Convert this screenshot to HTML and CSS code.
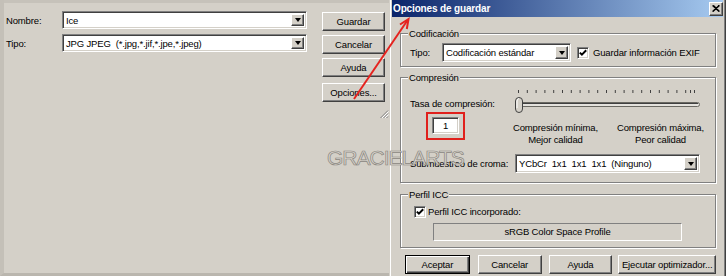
FILE: index.html
```html
<!DOCTYPE html>
<html lang="es">
<head>
<meta charset="utf-8">
<title>Opciones de guardar</title>
<link rel="stylesheet" href="styles.css">
</head>
<body>
<div class="screen">
  <div class="left">
    <div class="filedlg">
      <div class="fd-main">
        <div class="fd-fields">
          <span class="fd-label">Nombre:</span>
          <div class="combo"><span class="combo-text">Ice</span><span class="drop"></span></div>
          <span class="fd-label">Tipo:</span>
          <div class="combo"><span class="combo-text">JPG JPEG  (*.jpg,*.jif,*.jpe,*.jpeg)</span><span class="drop"></span></div>
        </div>
        <div class="fd-buttons">
          <button class="btn">Guardar</button>
          <button class="btn">Cancelar</button>
          <button class="btn">Ayuda</button>
          <button class="btn btn-last">Opciones...</button>
        </div>
      </div>
      <svg class="grip" width="9" height="8" viewBox="0 0 9 8">
        <path d="M8 0.5 L0.5 8 M8 3.5 L3.5 8 M8 6.5 L6.5 8" stroke="#808080" stroke-width="1"/>
        <path d="M8.5 1.5 L1.5 8.5 M8.5 4.5 L4.5 8.5" stroke="#fff" stroke-width="1"/>
      </svg>
    </div>
  </div>

  <div class="dialog">
    <div class="titlebar">
      <span class="title">Opciones de guardar</span>
      <span class="close"><svg width="8" height="7" viewBox="0 0 8 7"><path d="M0.5 0.5 L7 6.5 M1.5 0.5 L7.5 6.5 M7 0.5 L0.5 6.5 M7.5 0.5 L1 6.5" stroke="#000" stroke-width="1.1"/></svg></span>
    </div>
    <div class="dlg-body">
      <fieldset class="group group-cod">
        <legend>Codificación</legend>
        <div class="cod-row">
          <span class="cod-label">Tipo:</span>
          <div class="combo combo-cod"><span class="combo-text">Codificación estándar</span><span class="drop"></span></div>
          <span class="chk"><svg width="8" height="8" viewBox="0 0 8 8"><polyline points="0.8,3.6 2.9,5.7 7.2,1.3" fill="none" stroke="#000" stroke-width="2"/></svg></span>
          <span class="chk-label">Guardar información EXIF</span>
        </div>
      </fieldset>

      <fieldset class="group group-comp">
        <legend>Compresión</legend>
        <div class="rate-row">
          <span class="rate-label">Tasa de compresión:</span>
          <svg class="slider" width="188" height="24" viewBox="0 0 188 24">
            <g fill="#404040">
              <rect x="3" y="2" width="1" height="3"/><rect x="11.8" y="2" width="1" height="3"/><rect x="20.6" y="2" width="1" height="3"/><rect x="29.4" y="2" width="1" height="3"/><rect x="38.2" y="2" width="1" height="3"/><rect x="47" y="2" width="1" height="3"/><rect x="55.8" y="2" width="1" height="3"/><rect x="64.6" y="2" width="1" height="3"/><rect x="73.4" y="2" width="1" height="3"/><rect x="82.2" y="2" width="1" height="3"/><rect x="91" y="2" width="1" height="3"/><rect x="99.8" y="2" width="1" height="3"/><rect x="108.6" y="2" width="1" height="3"/><rect x="117.4" y="2" width="1" height="3"/><rect x="126.2" y="2" width="1" height="3"/><rect x="135" y="2" width="1" height="3"/><rect x="143.8" y="2" width="1" height="3"/><rect x="152.6" y="2" width="1" height="3"/><rect x="161.4" y="2" width="1" height="3"/><rect x="170.2" y="2" width="1" height="3"/><rect x="175" y="2" width="1" height="3"/><rect x="179" y="2" width="1" height="3"/>
            </g>
            <rect x="1.5" y="14.5" width="183" height="4" rx="2" fill="#e4e2dd" stroke="#6a6862"/>
            <line x1="3" y1="15.5" x2="183" y2="15.5" stroke="#404040"/>
            <rect x="0.5" y="9.5" width="7" height="15" rx="3.5" fill="#d4d0c8" stroke="#404040"/>
            <path d="M2 20 V13 Q2 11 4 10.5" fill="none" stroke="#fff"/>
          </svg>
        </div>
        <div class="mid-row">
          <div class="redbox"><span class="numbox">1</span></div>
          <div class="quality">
            <span>Compresión mínima,<br>Mejor calidad</span>
            <span>Compresión máxima,<br>Peor calidad</span>
          </div>
        </div>
        <div class="sub-row">
          <span class="sub-label">Submuestreo de croma:</span>
          <div class="combo combo-sub"><span class="combo-text">YCbCr  1x1  1x1  1x1  (Ninguno)</span><span class="drop"></span></div>
        </div>
      </fieldset>

      <fieldset class="group group-icc">
        <legend>Perfil ICC</legend>
        <div class="icc-row">
          <span class="chk"><svg width="8" height="8" viewBox="0 0 8 8"><polyline points="0.8,3.6 2.9,5.7 7.2,1.3" fill="none" stroke="#000" stroke-width="2"/></svg></span>
          <span class="chk-label">Perfil ICC incorporado:</span>
        </div>
        <div class="profile">sRGB Color Space Profile</div>
      </fieldset>

      <div class="dlg-buttons">
        <button class="btn btn-default btn-acc">Aceptar</button>
        <button class="btn btn-can">Cancelar</button>
        <button class="btn btn-ayu">Ayuda</button>
        <button class="btn btn-opt">Ejecutar optimizador...</button>
      </div>
    </div>
  </div>

  <div class="watermark">GRACIELARTS</div>
  <svg class="arrow" width="726" height="276" viewBox="0 0 726 276">
    <path d="M354 99 L407 21" stroke="#e5231f" stroke-width="2" fill="none"/>
    <path d="M400 24.5 L408.5 19 L406.8 29" stroke="#e5231f" stroke-width="2" fill="none" stroke-linejoin="miter"/>
  </svg>
</div>
</body>
</html>
```

FILE: styles.css
```css
html, body {
  margin: 0;
  padding: 0;
}
body {
  background: #d4d0c8;
  font-family: "Liberation Sans", Arial, sans-serif;
  font-size: 9.5px;
  letter-spacing: -0.15px;
  color: #000;
  overflow: hidden;
}
.screen {
  position: relative;
  display: flex;
  width: 726px;
  height: 276px;
  overflow: hidden;
  white-space: nowrap;
}

/* ---------- buttons ---------- */
.btn {
  font: inherit;
  letter-spacing: inherit;
  color: #000;
  background: #d4d0c8;
  border: 1px solid;
  border-color: #fff #404040 #404040 #fff;
  box-shadow: inset -1px -1px 0 #808080;
  padding: 0;
  margin: 0;
  height: 19px;
  line-height: 15px;
  text-align: center;
  box-sizing: border-box;
  white-space: nowrap;
}
.btn-default {
  border-color: #000;
  box-shadow: inset 1px 1px 0 #fff, inset -1px -1px 0 #404040, inset -2px -2px 0 #808080;
}

/* ---------- combo boxes ---------- */
.combo {
  display: flex;
  align-items: stretch;
  background: #fff;
  border: 1px solid;
  border-color: #808080 #fff #fff #808080;
  box-shadow: inset 1px 1px 0 #404040, inset -1px -1px 0 #d4d0c8;
  padding: 2px;
  box-sizing: border-box;
  height: 19px;
}
.combo-text {
  flex: 1;
  padding-left: 1px;
  white-space: pre;
  overflow: hidden;
  line-height: 13px;
  align-self: center;
}
.drop {
  flex: none;
  width: 13px;
  background: #d4d0c8;
  border: 1px solid;
  border-color: #fff #404040 #404040 #fff;
  box-shadow: inset -1px -1px 0 #808080;
  box-sizing: border-box;
  display: flex;
  align-items: center;
  justify-content: center;
}
.drop::after {
  content: "";
  width: 0;
  height: 0;
  border-left: 3px solid transparent;
  border-right: 3px solid transparent;
  border-top: 4px solid #000;
}

/* ---------- left file dialog ---------- */
.left {
  width: 389px;
  flex: none;
  box-sizing: border-box;
  border-left: 4px solid #c4c0b8;
  border-bottom: 3px solid #bab6ae;
}
.filedlg {
  height: 119px;
  box-sizing: border-box;
  border-top: 3px solid #c6c2ba;
  padding: 8px 0 1px 2px;
  display: flex;
  flex-direction: column;
}
.fd-main {
  display: flex;
  align-items: flex-start;
}
.fd-fields {
  display: grid;
  grid-template-columns: 56px 245px;
  row-gap: 5px;
  align-items: center;
  align-content: start;
}
.fd-label {
  line-height: 13px;
}
.fd-fields .combo {
  height: 18px;
}
.fd-buttons {
  margin-left: 15px;
  margin-top: 1px;
  width: 63px;
  display: flex;
  flex-direction: column;
  gap: 4px;
}
.btn-last {
  margin-top: 2px;
}
.grip {
  margin-top: auto;
  align-self: flex-end;
  display: block;
}

/* ---------- options dialog ---------- */
.dialog {
  width: 337px;
  flex: none;
  box-sizing: border-box;
  border-left: 1px solid #d4d0c8;
  border-right: 1px solid #404040;
  padding: 0 2px;
  box-shadow: inset 1px 0 0 #fff, inset -1px 0 0 #808080;
}
.titlebar {
  height: 17px;
  background: linear-gradient(to right, #0a246a, #a6caf0);
  display: flex;
  align-items: center;
  justify-content: space-between;
  padding-left: 1px;
}
.title {
  color: #fff;
  font-weight: bold;
  font-size: 10px;
  line-height: 13px;
}
.close {
  width: 14px;
  height: 14px;
  box-sizing: border-box;
  background: #d4d0c8;
  border: 1px solid;
  border-color: #fff #404040 #404040 #fff;
  box-shadow: inset -1px -1px 0 #808080;
  display: flex;
  align-items: center;
  justify-content: center;
}
.close svg {
  display: block;
}
.dlg-body {
  padding: 10px 7px 0 8px;
}
.group {
  margin: 0;
  border: 1px solid #808080;
  box-shadow: 1px 1px 0 #fff, inset 1px 1px 0 #fff;
  padding: 3px 8px 4px 9px;
  min-width: 0;
}
.group legend {
  padding: 0 1px;
  margin-left: -2px;
  line-height: 13px;
  background: #d4d0c8;
}

.cod-row {
  display: flex;
  align-items: center;
}
.cod-label {
  width: 32px;
  line-height: 13px;
}
.combo-cod {
  width: 129px;
}
.chk {
  flex: none;
  width: 12px;
  height: 12px;
  box-sizing: border-box;
  background: #fff;
  border: 1px solid;
  border-color: #808080 #fff #fff #808080;
  box-shadow: inset 1px 1px 0 #404040, inset -1px -1px 0 #d4d0c8;
  display: flex;
  align-items: center;
  justify-content: center;
}
.chk svg {
  display: block;
}
.cod-row .chk {
  margin-left: 6px;
}
.chk-label {
  margin-left: 4px;
  line-height: 13px;
}

.group-comp {
  margin-top: 4px;
  padding-top: 4px;
  padding-bottom: 9px;
}
.rate-row {
  display: flex;
  height: 24px;
}
.rate-label {
  width: 105px;
  padding-top: 9px;
  line-height: 13px;
}
.slider {
  display: block;
  overflow: visible;
}
.mid-row {
  display: flex;
  height: 28px;
}
.redbox {
  margin-left: 16px;
  width: 39px;
  height: 28px;
  box-sizing: border-box;
  border: 2px solid #e0201c;
  padding: 3px 0 0 4px;
}
.numbox {
  display: block;
  width: 27px;
  height: 17px;
  box-sizing: border-box;
  background: #fff;
  border: 1px solid;
  border-color: #808080 #fff #fff #808080;
  box-shadow: inset 1px 1px 0 #404040, inset -1px -1px 0 #d4d0c8;
  text-align: center;
  line-height: 15px;
}
.quality {
  margin-left: 48px;
  width: 191px;
  margin-top: 10px;
  display: flex;
  justify-content: space-between;
  text-align: center;
  line-height: 12px;
}
.sub-row {
  display: flex;
  align-items: center;
  margin-top: 14px;
}
.sub-label {
  width: 105px;
  line-height: 13px;
}
.combo-sub {
  width: 185px;
}

.group-icc {
  margin-top: 5px;
  padding-top: 4px;
  padding-bottom: 6px;
}
.icc-row {
  display: flex;
  align-items: center;
  height: 13px;
  padding-left: 4px;
}
.icc-row .chk-label {
  margin-left: 2px;
}
.profile {
  margin: 5px 0 0 23px;
  width: 249px;
  height: 18px;
  box-sizing: border-box;
  border: 1px solid;
  border-color: #808080 #fff #fff #808080;
  text-align: center;
  line-height: 16px;
}

.dlg-buttons {
  display: flex;
  margin-top: 7px;
  padding-left: 5px;
}
.btn-acc { width: 65px; }
.btn-can { width: 64px; margin-left: 8px; }
.btn-ayu { width: 64px; margin-left: 7px; }
.btn-opt { width: 98px; margin-left: 6px; }

/* ---------- overlays ---------- */
.watermark {
  position: absolute;
  left: 327px;
  top: 146px;
  font-family: "Liberation Sans", Arial, sans-serif;
  font-size: 21px;
  line-height: 24px;
  letter-spacing: -1px;
  color: #d9d5cd;
  -webkit-text-stroke: 0.7px #8a8680;
  pointer-events: none;
}
.arrow {
  position: absolute;
  left: 0;
  top: 0;
  pointer-events: none;
}
```
